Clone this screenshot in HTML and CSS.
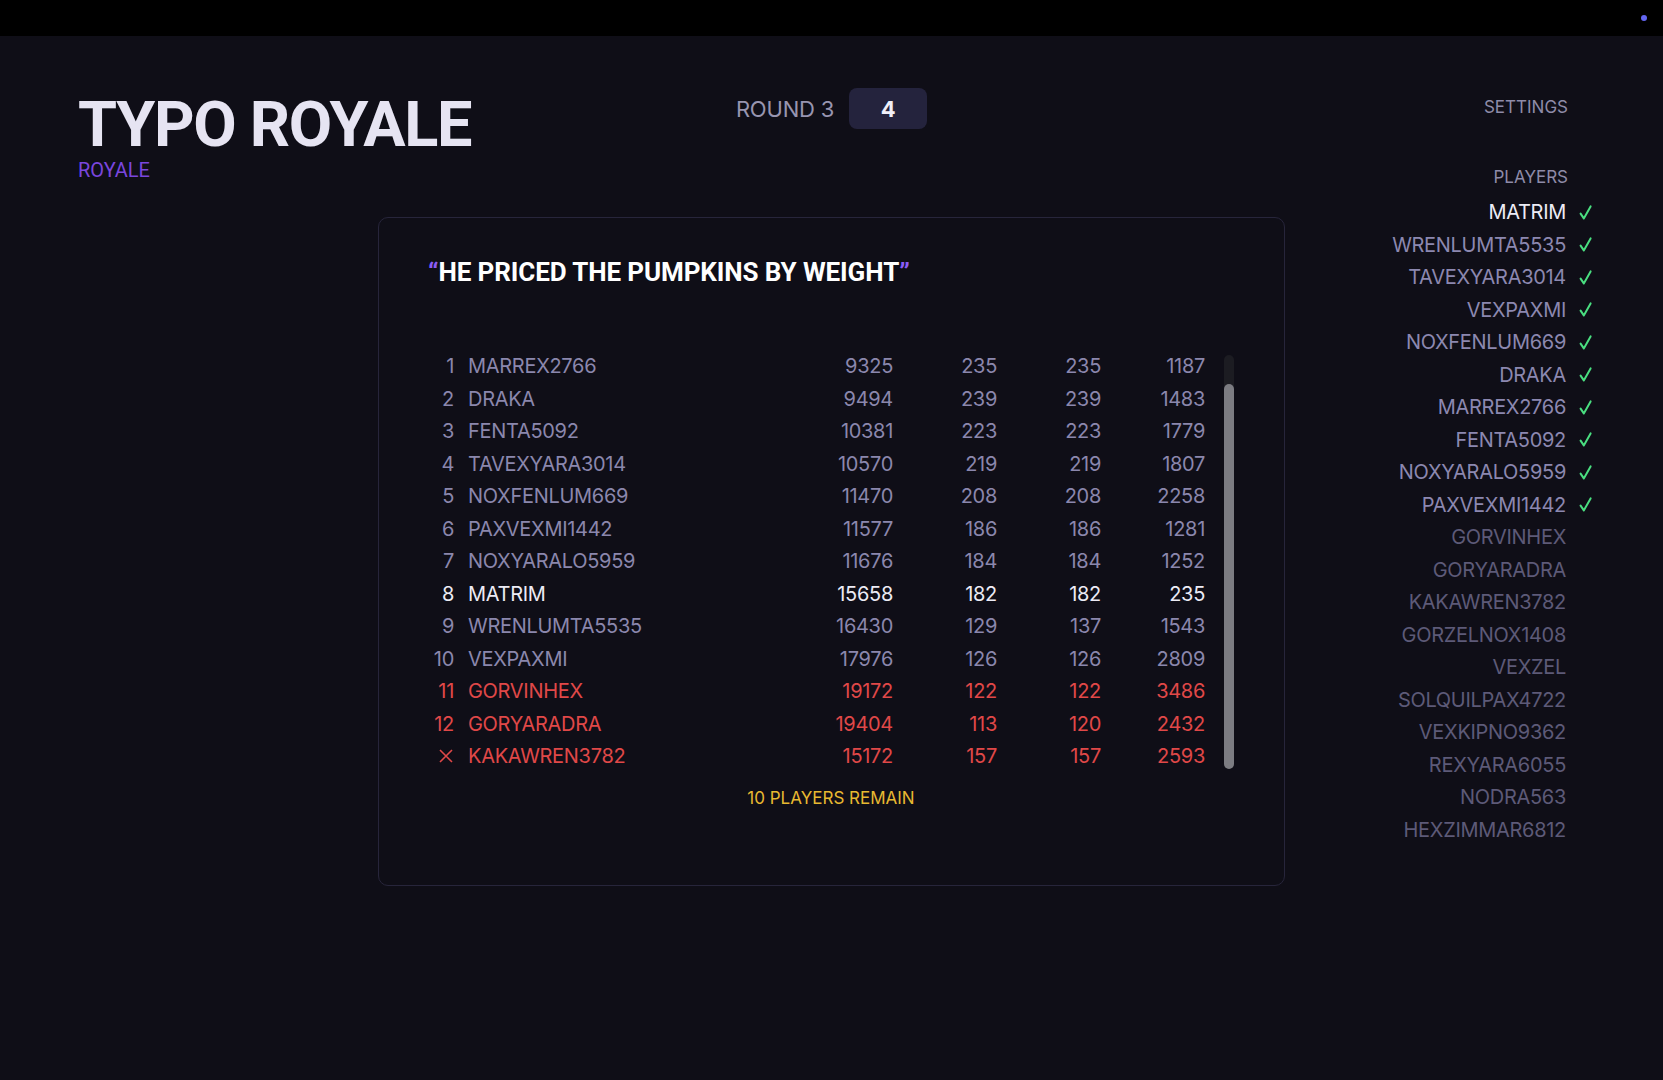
FILE: index.html
```html
<!DOCTYPE html>
<html lang="en">
<head>
<meta charset="utf-8">
<title>Typo Royale</title>
<link rel="stylesheet" href="styles.css">
</head>
<body>
<div class="topbar"><span class="dot"></span></div>
<main class="main">
  <section class="brand">
    <h1 class="title">TYPO ROYALE</h1>
    <div class="subtitle">ROYALE</div>
  </section>

  <section class="center">
    <div class="round">
      <span class="round-label">ROUND 3</span>
      <span class="badge">4</span>
    </div>
    <div class="card">
      <div class="quote"><span class="qm">&ldquo;</span>HE PRICED THE PUMPKINS BY WEIGHT<span class="qm">&rdquo;</span></div>
      <div class="board">
        <div class="rows">
          <div class="row"><span class="rank">1</span><span class="name">MARREX2766</span><span class="num">9325</span><span class="num">235</span><span class="num">235</span><span class="num">1187</span></div>
          <div class="row"><span class="rank">2</span><span class="name">DRAKA</span><span class="num">9494</span><span class="num">239</span><span class="num">239</span><span class="num">1483</span></div>
          <div class="row"><span class="rank">3</span><span class="name">FENTA5092</span><span class="num">10381</span><span class="num">223</span><span class="num">223</span><span class="num">1779</span></div>
          <div class="row"><span class="rank">4</span><span class="name">TAVEXYARA3014</span><span class="num">10570</span><span class="num">219</span><span class="num">219</span><span class="num">1807</span></div>
          <div class="row"><span class="rank">5</span><span class="name">NOXFENLUM669</span><span class="num">11470</span><span class="num">208</span><span class="num">208</span><span class="num">2258</span></div>
          <div class="row"><span class="rank">6</span><span class="name">PAXVEXMI1442</span><span class="num">11577</span><span class="num">186</span><span class="num">186</span><span class="num">1281</span></div>
          <div class="row"><span class="rank">7</span><span class="name">NOXYARALO5959</span><span class="num">11676</span><span class="num">184</span><span class="num">184</span><span class="num">1252</span></div>
          <div class="row me"><span class="rank">8</span><span class="name">MATRIM</span><span class="num">15658</span><span class="num">182</span><span class="num">182</span><span class="num">235</span></div>
          <div class="row"><span class="rank">9</span><span class="name">WRENLUMTA5535</span><span class="num">16430</span><span class="num">129</span><span class="num">137</span><span class="num">1543</span></div>
          <div class="row"><span class="rank">10</span><span class="name">VEXPAXMI</span><span class="num">17976</span><span class="num">126</span><span class="num">126</span><span class="num">2809</span></div>
          <div class="row out"><span class="rank">11</span><span class="name">GORVINHEX</span><span class="num">19172</span><span class="num">122</span><span class="num">122</span><span class="num">3486</span></div>
          <div class="row out"><span class="rank">12</span><span class="name">GORYARADRA</span><span class="num">19404</span><span class="num">113</span><span class="num">120</span><span class="num">2432</span></div>
          <div class="row out"><span class="rank"><svg class="x" viewBox="0 0 16 16" width="16" height="16"><path d="M2 2 L14 14 M14 2 L2 14" stroke="currentColor" stroke-width="1.6" fill="none"/></svg></span><span class="name">KAKAWREN3782</span><span class="num">15172</span><span class="num">157</span><span class="num">157</span><span class="num">2593</span></div>
        </div>
        <div class="scrollbar"><div class="thumb"></div></div>
      </div>
      <div class="remain">10 PLAYERS REMAIN</div>
    </div>
  </section>

  <aside class="side">
    <div class="side-head settings">SETTINGS</div>
    <div class="side-head players-head">PLAYERS</div>
    <ul class="players">
      <li class="me"><span>MATRIM</span><span class="check"><svg viewBox="0 0 13 15" width="13" height="15"><path d="M1.6 8.6 L4.8 13.4 L11.6 1.4" stroke="currentColor" stroke-width="2" stroke-linecap="round" stroke-linejoin="round" fill="none"/></svg></span></li>
      <li class="done"><span>WRENLUMTA5535</span><span class="check"><svg viewBox="0 0 13 15" width="13" height="15"><path d="M1.6 8.6 L4.8 13.4 L11.6 1.4" stroke="currentColor" stroke-width="2" stroke-linecap="round" stroke-linejoin="round" fill="none"/></svg></span></li>
      <li class="done"><span>TAVEXYARA3014</span><span class="check"><svg viewBox="0 0 13 15" width="13" height="15"><path d="M1.6 8.6 L4.8 13.4 L11.6 1.4" stroke="currentColor" stroke-width="2" stroke-linecap="round" stroke-linejoin="round" fill="none"/></svg></span></li>
      <li class="done"><span>VEXPAXMI</span><span class="check"><svg viewBox="0 0 13 15" width="13" height="15"><path d="M1.6 8.6 L4.8 13.4 L11.6 1.4" stroke="currentColor" stroke-width="2" stroke-linecap="round" stroke-linejoin="round" fill="none"/></svg></span></li>
      <li class="done"><span>NOXFENLUM669</span><span class="check"><svg viewBox="0 0 13 15" width="13" height="15"><path d="M1.6 8.6 L4.8 13.4 L11.6 1.4" stroke="currentColor" stroke-width="2" stroke-linecap="round" stroke-linejoin="round" fill="none"/></svg></span></li>
      <li class="done"><span>DRAKA</span><span class="check"><svg viewBox="0 0 13 15" width="13" height="15"><path d="M1.6 8.6 L4.8 13.4 L11.6 1.4" stroke="currentColor" stroke-width="2" stroke-linecap="round" stroke-linejoin="round" fill="none"/></svg></span></li>
      <li class="done"><span>MARREX2766</span><span class="check"><svg viewBox="0 0 13 15" width="13" height="15"><path d="M1.6 8.6 L4.8 13.4 L11.6 1.4" stroke="currentColor" stroke-width="2" stroke-linecap="round" stroke-linejoin="round" fill="none"/></svg></span></li>
      <li class="done"><span>FENTA5092</span><span class="check"><svg viewBox="0 0 13 15" width="13" height="15"><path d="M1.6 8.6 L4.8 13.4 L11.6 1.4" stroke="currentColor" stroke-width="2" stroke-linecap="round" stroke-linejoin="round" fill="none"/></svg></span></li>
      <li class="done"><span>NOXYARALO5959</span><span class="check"><svg viewBox="0 0 13 15" width="13" height="15"><path d="M1.6 8.6 L4.8 13.4 L11.6 1.4" stroke="currentColor" stroke-width="2" stroke-linecap="round" stroke-linejoin="round" fill="none"/></svg></span></li>
      <li class="done"><span>PAXVEXMI1442</span><span class="check"><svg viewBox="0 0 13 15" width="13" height="15"><path d="M1.6 8.6 L4.8 13.4 L11.6 1.4" stroke="currentColor" stroke-width="2" stroke-linecap="round" stroke-linejoin="round" fill="none"/></svg></span></li>
      <li><span>GORVINHEX</span><span class="check"></span></li>
      <li><span>GORYARADRA</span><span class="check"></span></li>
      <li><span>KAKAWREN3782</span><span class="check"></span></li>
      <li><span>GORZELNOX1408</span><span class="check"></span></li>
      <li><span>VEXZEL</span><span class="check"></span></li>
      <li><span>SOLQUILPAX4722</span><span class="check"></span></li>
      <li><span>VEXKIPNO9362</span><span class="check"></span></li>
      <li><span>REXYARA6055</span><span class="check"></span></li>
      <li><span>NODRA563</span><span class="check"></span></li>
      <li><span>HEXZIMMAR6812</span><span class="check"></span></li>
    </ul>
  </aside>
</main>
</body>
</html>
```

FILE: styles.css
```css
* { box-sizing: border-box; }
html, body { margin: 0; padding: 0; }
body {
  background: #0f0e17;
  font-family: Inter, "Noto Sans", sans-serif;
  color: #8b87ad;
  min-height: 1080px;
}
.topbar {
  height: 36px;
  background: #000;
  display: flex;
  justify-content: flex-end;
  align-items: center;
  padding-right: 16px;
}
.dot {
  width: 6px; height: 6px; border-radius: 50%;
  background: #6366f1;
}
.main {
  display: grid;
  grid-template-columns: 300px 907px 1fr;
  padding: 0 70px 0 78px;
  align-items: start;
}
.brand { padding-top: 57px; }
.title {
  margin: 0;
  font-family: Roboto, "Liberation Sans", sans-serif;
  font-weight: 700;
  font-size: 63px;
  line-height: 1;
  letter-spacing: -1.3px;
  color: #e6e4f2;
  white-space: nowrap;
}
.subtitle {
  margin-top: 2px;
  font-family: Roboto, sans-serif;
  font-size: 20px;
  line-height: 24px;
  color: #7a46dd;
}
.center { padding-top: 52px; }
.round {
  display: flex;
  justify-content: center;
  align-items: center;
  gap: 15px;
  height: 41px;
}
.round-label {
  font-size: 22px;
  letter-spacing: -0.2px;
  color: #9895b0;
}
.badge {
  width: 78px; height: 41px;
  border-radius: 8px;
  background: #24233d;
  display: flex; align-items: center; justify-content: center;
  font-weight: 700;
  font-size: 22px;
  color: #f0eff8;
}
.card {
  margin-top: 88px;
  border: 1px solid #27253b;
  border-radius: 10px;
  padding: 38px 50px 76px 49px;
  height: 669px;
}
.quote {
  font-family: Roboto, sans-serif;
  font-weight: 700;
  font-size: 26px;
  line-height: 32px;
  letter-spacing: -0.1px;
  color: #ffffff;
  white-space: nowrap;
}
.qm { color: #8b5cf6; }
.board {
  margin-top: 62px;
  display: flex;
  gap: 19px;
}
.rows { width: 777px; }
.row {
  display: grid;
  grid-template-columns: 26px 349px 90px 104px 104px 104px;
  height: 32.5px;
  align-items: center;
  font-size: 20px;
  letter-spacing: -0.3px;
  color: #8b87ad;
}
.rank { text-align: right; display: flex; justify-content: flex-end; }
.name { padding-left: 14px; }
.num { text-align: right; }
.row.me { color: #ecebf5; }
.row.out { color: #e04848; }
.x { display: block; }
.scrollbar {
  width: 10px;
  margin-top: 5px;
  height: 414px;
  border-radius: 5px;
  background: #1c1c22;
  display: flex;
  flex-direction: column;
  justify-content: flex-end;
}
.thumb {
  height: 385px;
  border-radius: 5px;
  background: #7c7c82;
}
.remain {
  margin-top: 13px;
  text-align: center;
  font-size: 17px;
  line-height: 24px;
  color: #e8b931;
}
.side {
  padding-top: 59px;
  display: flex;
  flex-direction: column;
  align-items: flex-end;
}
.side-head {
  font-size: 17px;
  line-height: 24px;
  color: #8e8ba8;
  padding-right: 25px;
}
.players-head { margin-top: 46px; }
.players {
  list-style: none;
  margin: 7px 0 0;
  padding: 0;
  display: flex;
  flex-direction: column;
  align-items: flex-end;
}
.players li {
  display: flex;
  align-items: center;
  height: 32.5px;
  font-size: 20px;
  letter-spacing: -0.3px;
  color: #5d5a78;
}
.players li.done { color: #8c88b0; }
.players li.me { color: #ecebf5; }
.check {
  width: 27px;
  padding-left: 13px;
  display: flex;
  align-items: center;
  color: #4ade80;
}
.check svg { display: block; }
```
